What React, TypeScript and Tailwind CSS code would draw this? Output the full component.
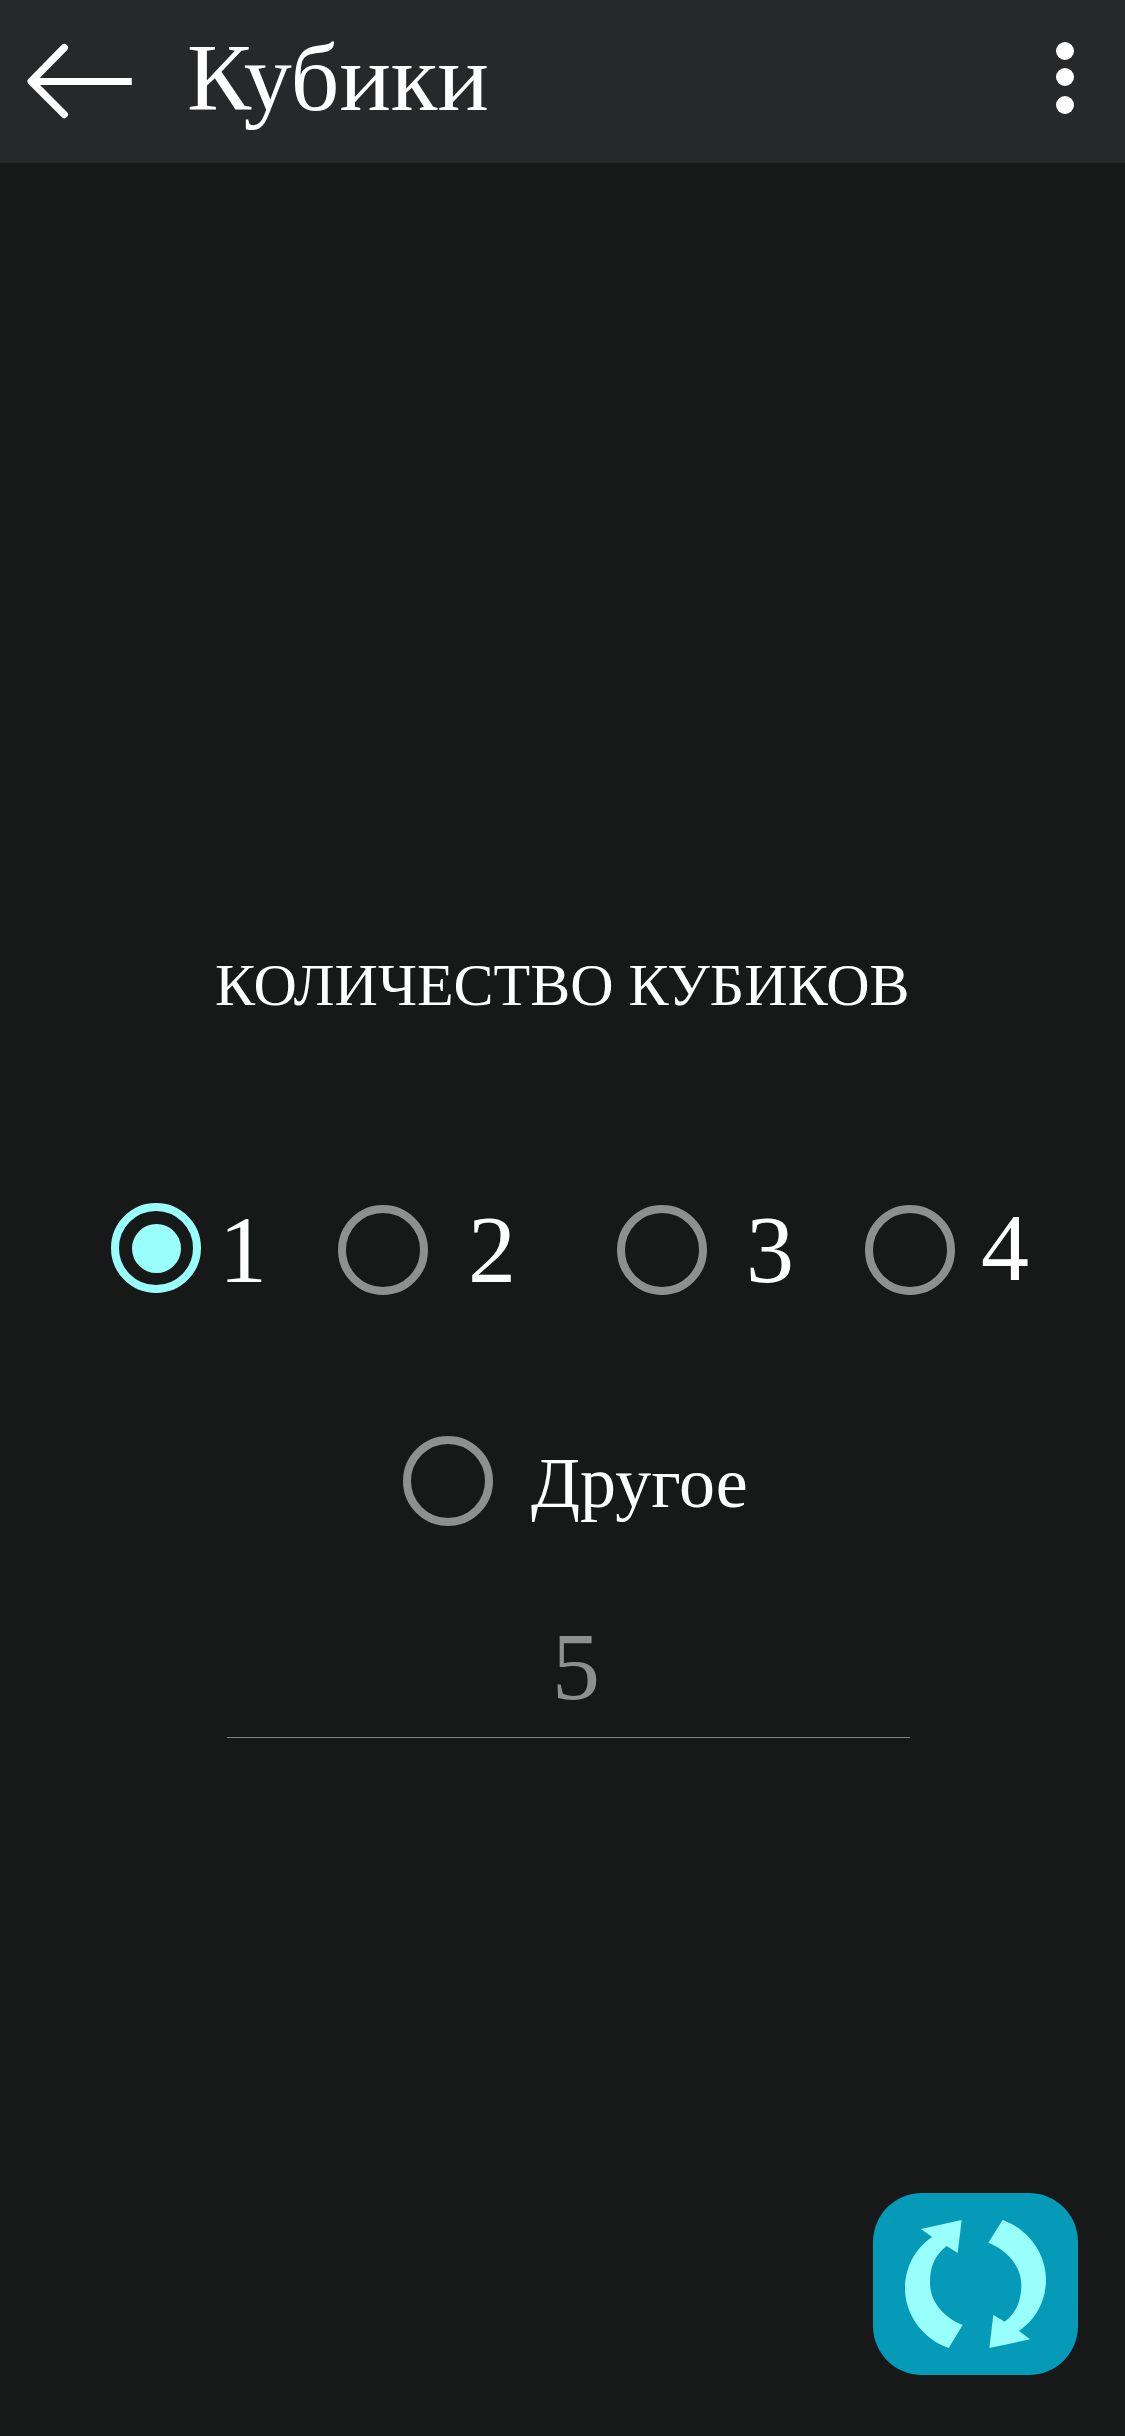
type RadioProps = { checked?: boolean; className?: string };

function Radio({ checked = false, className = "" }: RadioProps) {
  return (
    <span
      role="radio"
      aria-checked={checked}
      className={`block h-[90px] w-[90px] shrink-0 rounded-full border-8 ${
        checked ? "border-[#99fffd] pt-[13px] pl-[13px]" : "border-[#8f8f8f]"
      } ${className}`}
    >
      {checked && <span className="block h-[49px] w-[49px] rounded-full bg-[#99fffd]" />}
    </span>
  );
}

function BackArrow() {
  return (
    <svg className="mt-[43px] ml-[26px] h-[76px] w-[107px] shrink-0" viewBox="26 43 107 76" fill="none" stroke="#fff">
      <path d="M64.3 47.7 31.2 81.3 64.3 114.5" strokeWidth="7.4" strokeLinecap="round" strokeLinejoin="round" />
      <path d="M31 81.5H131.8" strokeWidth="7" />
    </svg>
  );
}

function RollIcon() {
  return (
    <svg className="h-full w-full" viewBox="39 39 615 546" fill="#99fffd">
      <path d="M183 147 305 120 293 219 260 198C224 226 210 260 210 308C210 365 250 412 308 435L266 504C185 475 135 400 135 326C135 260 166 206 216 171Z" />
      <path d="M510 478 388 504 400 405 434 425C469 398 484 362 484 316C484 258 442 211 385 188L428 120C508 149 558 224 558 298C558 364 527 418 477 453Z" />
    </svg>
  );
}

export default function App() {
  return (
    <div className="flex h-[2436px] w-[1125px] flex-col overflow-hidden bg-[#171918] font-['Liberation_Serif',serif] text-white">
      <header className="flex h-[163px] shrink-0 items-start bg-[#27282a]">
        <BackArrow />
        <h1 className="mt-[30px] ml-[54px] text-[96px] leading-none">Кубики</h1>
        <div className="mt-[42px] mr-[51px] ml-auto flex flex-col">
          <span className="h-[18px] w-[18px] rounded-full bg-white" />
          <span className="mt-2 h-[18px] w-[18px] rounded-full bg-white" />
          <span className="mt-[10px] h-[18px] w-[18px] rounded-full bg-white" />
        </div>
      </header>

      <main className="flex grow flex-col">
        <h2 className="mt-[792px] ml-[215px] text-[60px] leading-none whitespace-nowrap">КОЛИЧЕСТВО КУБИКОВ</h2>

        <div className="mt-[187px] flex h-24 items-start text-[96px] leading-none" role="radiogroup">
          <Radio checked className="mt-px ml-[111px]" />
          <span className="ml-[18px] w-12">1</span>
          <Radio className="mt-[3px] ml-[71px]" />
          <span className="ml-[40px] w-12">2</span>
          <Radio className="mt-[3px] ml-[101px]" />
          <span className="ml-[39px] w-12">3</span>
          <Radio className="mt-[3px] ml-[71px]" />
          <span className="-mt-[2px] ml-[26px] w-12">4</span>
        </div>

        <div className="mt-[138px] ml-[403px] flex h-[90px] items-start">
          <Radio />
          <span className="mt-[11px] ml-[38px] text-[72px] leading-none">Другое</span>
        </div>

        <div className="mt-[93px] ml-[227px] h-[119px] w-[683px] border-b border-[#7f8280] pl-[325px] text-[96px] leading-none text-[#8f8f8f]">
          5
        </div>

        <button className="mt-auto mr-[47px] mb-[61px] h-[182px] w-[205px] self-end rounded-[49px] bg-[#059ab7]">
          <RollIcon />
        </button>
      </main>
    </div>
  );
}
